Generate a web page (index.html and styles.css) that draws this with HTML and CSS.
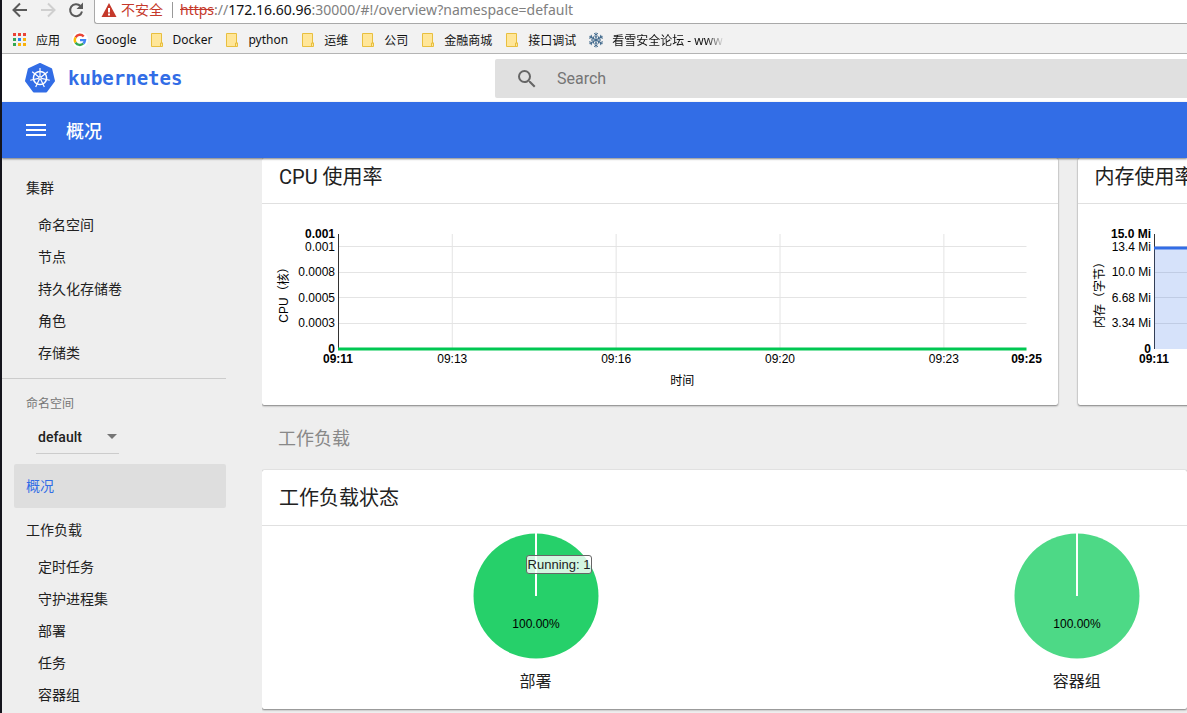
FILE: index.html
```html
<!DOCTYPE html>
<html lang="zh-CN">
<head>
<meta charset="utf-8">
<title>概况 - Kubernetes Dashboard</title>
<link rel="stylesheet" href="styles.css">
</head>
<body>
<svg class="sprites" aria-hidden="true">
  <symbol id="folder" viewBox="0 0 14 16"><path d="M1.500 1.500h10v9.500h1v3.500h-11z" fill="#ffe699" stroke="#e8bf3f"/><path d="M10.500 14v-3h2" fill="none" stroke="#e8bf3f"/></symbol>
</svg>
<div class="browser">
  <div class="toolbar">
    <nav class="history">
      <button aria-label="后退"><svg width="20" height="20" viewBox="0 0 20 20"><path d="M17 10H4M10 3.500 3.500 10l6.500 6.500" fill="none" stroke="#5a5a5a" stroke-width="2"/></svg></button>
      <button aria-label="前进"><svg width="20" height="20" viewBox="0 0 20 20"><path d="M3 10h13M10 3.500l6.500 6.500L10 16.500" fill="none" stroke="#cfcfcf" stroke-width="2"/></svg></button>
      <button aria-label="刷新"><svg width="20" height="20" viewBox="0 0 20 20"><path d="M14.500 6A6 6 0 1 0 16 11.500" fill="none" stroke="#5a5a5a" stroke-width="2"/><path d="M17 2.500V9h-6.500z" fill="#5a5a5a"/></svg></button>
    </nav>
    <div class="address">
      <svg width="16" height="14" viewBox="0 0 16 14"><path d="M8 0l7.500 14H.5z" fill="#c5392b"/><path d="M8 5v4.500M8 10.500v2" stroke="#fff" stroke-width="2"/></svg>
      <span class="unsafe">不安全</span>
      <span class="url"><s>https</s>://<b>172.16.60.96</b>:30000/#!/overview?namespace=default</span>
    </div>
  </div>
  <nav class="bookmarks">
    <a href="#apps"><svg width="16" height="16" viewBox="0 0 16 16"><path d="M1 1h3v3H1zM6 1h3v3H6zM11 1h3v3h-3z" fill="#ea4335"/><path d="M1 6h3v3H1z" fill="#34a853"/><path d="M6 6h3v3H6z" fill="#2684e8"/><path d="M11 6h3v3h-3zM6 11h3v3H6zM11 11h3v3h-3z" fill="#f9b20b"/><path d="M1 11h3v3H1z" fill="#34a853"/></svg>应用</a>
    <a href="#google"><svg width="16" height="16" viewBox="0 0 16 16"><circle cx="8" cy="8" r="8" fill="#fff"/><g fill="none" stroke-width="2.400"><path d="M3.600 5.300A5 5 0 0 1 11.700 4.500" stroke="#ea4335"/><path d="M3.600 5.300a5 5 0 0 0 0 5.400" stroke="#fbbc05"/><path d="M3.600 10.700a5 5 0 0 0 7.700.8" stroke="#34a853"/><path d="M11.300 11.500A5 5 0 0 0 13 8.100H8" stroke="#4285f4"/></g></svg>Google</a>
    <a href="#docker"><svg width="16" height="16"><use href="#folder"/></svg>Docker</a>
    <a href="#python"><svg width="16" height="16"><use href="#folder"/></svg>python</a>
    <a href="#ops"><svg width="16" height="16"><use href="#folder"/></svg>运维</a>
    <a href="#company"><svg width="16" height="16"><use href="#folder"/></svg>公司</a>
    <a href="#mall"><svg width="16" height="16"><use href="#folder"/></svg>金融商城</a>
    <a href="#api"><svg width="16" height="16"><use href="#folder"/></svg>接口调试</a>
    <a href="#kanxue"><svg width="16" height="16" viewBox="-8 -8 16 16"><g fill="none" stroke="#41698c"><path id="arm" d="M0 0V-7.500M-2-6.800 0-5 2-6.800M-1.800-4.300 0-2.600 1.800-4.300"/><use href="#arm" transform="rotate(60)"/><use href="#arm" transform="rotate(120)"/><use href="#arm" transform="rotate(180)"/><use href="#arm" transform="rotate(240)"/><use href="#arm" transform="rotate(300)"/></g></svg><span class="fade">看雪安全论坛 - www</span></a>
  </nav>
</div>
<header class="brandbar">
  <a class="brand" href="#home">
    <svg width="32" height="32" viewBox="-16 -16 32 32">
      <path d="M0-14 11.200-8.800 14 3 6.200 13.400H-6.200L-14 3-11.200-8.800z" fill="#326de6" stroke="#326de6" stroke-width="2" stroke-linejoin="round"/>
      <g fill="none" stroke="#fff"><circle r="6.600" stroke-width="1.500"/><g stroke-width="1.200"><path id="spoke" d="M0-1.500V-10"/><use href="#spoke" transform="rotate(51.400)"/><use href="#spoke" transform="rotate(102.900)"/><use href="#spoke" transform="rotate(154.300)"/><use href="#spoke" transform="rotate(205.700)"/><use href="#spoke" transform="rotate(257.100)"/><use href="#spoke" transform="rotate(308.600)"/></g></g>
      <circle r="1.900" fill="#fff"/><circle r=".7" fill="#326de6"/>
    </svg>
    <span>kubernetes</span>
  </a>
  <label class="search">
    <svg width="24" height="24" viewBox="0 0 24 24"><path fill="#666" d="M15.500 14h-.79l-.28-.27A6.471 6.471 0 0 0 16 9.500 6.500 6.500 0 1 0 9.500 16c1.610 0 3.090-.59 4.230-1.570l.27.28v.79l5 4.990L20.490 19l-4.990-5zm-6 0C7.010 14 5 11.990 5 9.500S7.010 5 9.500 5 14 7.010 14 9.500 11.990 14 9.500 14z"/></svg>
    <input type="search" placeholder="Search" aria-label="Search">
  </label>
</header>
<div class="titlebar">
  <button aria-label="菜单"><svg width="24" height="24" viewBox="0 0 24 24"><path d="M2 6h20v2H2zM2 11h20v2H2zM2 16h20v2H2z" fill="#fff"/></svg></button>
  <h1>概况</h1>
</div>
<div class="layout">
  <aside class="sidebar">
    <a class="group" href="#cluster">集群</a>
    <a class="item" href="#namespaces">命名空间</a>
    <a class="item" href="#nodes">节点</a>
    <a class="item" href="#volumes">持久化存储卷</a>
    <a class="item" href="#roles">角色</a>
    <a class="item" href="#storage">存储类</a>
    <div class="namespace">
      <label for="ns">命名空间</label>
      <div class="select">
        <select id="ns"><option>default</option></select>
        <svg width="10" height="5" viewBox="0 0 10 5"><path d="M0 0h10L5 5z" fill="#757575"/></svg>
      </div>
    </div>
    <a class="group active" href="#overview">概况</a>
    <a class="group" href="#workloads">工作负载</a>
    <a class="item" href="#cronjobs">定时任务</a>
    <a class="item" href="#daemonsets">守护进程集</a>
    <a class="item" href="#deployments">部署</a>
    <a class="item" href="#jobs">任务</a>
    <a class="item" href="#pods">容器组</a>
  </aside>
  <main class="content">
    <div class="charts">
      <section class="card">
        <h2 class="chart-title">CPU 使用率</h2>
        <div class="plot">
          <svg width="100%" height="115">
            <g class="grid">
              <line x1="0" x2="100%" y1="12.500" y2="12.500"/><line x1="0" x2="100%" y1="38.500" y2="38.500"/><line x1="0" x2="100%" y1="63.500" y2="63.500"/><line x1="0" x2="100%" y1="89.500" y2="89.500"/>
              <line x1="16.600%" x2="16.600%" y1="0" y2="115"/><line x1="40.400%" x2="40.400%" y1="0" y2="115"/><line x1="64.200%" x2="64.200%" y1="0" y2="115"/><line x1="88%" x2="88%" y1="0" y2="115"/>
            </g>
            <path d="M.5 0v115" stroke="#333"/>
            <line x1="0" x2="100%" y1="115" y2="115" stroke="#00c752" stroke-width="3"/>
            <g class="ylabels"><text x="-3" y="4" class="edge">0.001</text><text x="-3" y="17">0.001</text><text x="-3" y="42">0.0008</text><text x="-3" y="68">0.0005</text><text x="-3" y="93">0.0003</text><text x="-3" y="119" class="edge">0</text></g>
            <g class="xlabels"><text x="0" y="129" class="edge">09:11</text><text x="16.600%" y="129">09:13</text><text x="40.400%" y="129">09:16</text><text x="64.200%" y="129">09:20</text><text x="88%" y="129">09:23</text><text x="100%" y="129" class="edge">09:25</text><text x="50%" y="151">时间</text></g>
            <text class="axis" transform="translate(-50 58) rotate(-90)">CPU（核）</text>
          </svg>
        </div>
      </section>
      <section class="card">
        <h2 class="chart-title">内存使用率</h2>
        <div class="plot">
          <svg width="100%" height="115">
            <g class="grid"><line x1="0" x2="100%" y1="12.500" y2="12.500"/><line x1="0" x2="100%" y1="38.500" y2="38.500"/><line x1="0" x2="100%" y1="63.500" y2="63.500"/><line x1="0" x2="100%" y1="89.500" y2="89.500"/></g>
            <path d="M.5 0v115" stroke="#333"/>
            <rect y="13" width="100%" height="102" fill="#326de6" fill-opacity=".2"/>
            <line x1="0" x2="100%" y1="14" y2="14" stroke="#326de6" stroke-width="3"/>
            <g class="ylabels"><text x="-3" y="4" class="edge">15.0 Mi</text><text x="-3" y="17">13.4 Mi</text><text x="-3" y="42">10.0 Mi</text><text x="-3" y="68">6.68 Mi</text><text x="-3" y="93">3.34 Mi</text><text x="-3" y="119" class="edge">0</text></g>
            <g class="xlabels"><text x="0" y="129" class="edge">09:11</text></g>
            <text class="axis" transform="translate(-50 58) rotate(-90)">内存（字节）</text>
          </svg>
        </div>
      </section>
    </div>
    <h2 class="section-title">工作负载</h2>
    <section class="card status">
      <h3>工作负载状态</h3>
      <div class="pies">
        <figure>
          <div class="pie hover">
            <svg width="126" height="126" viewBox="-63 -63 126 126"><circle r="62.500" fill="#26d06a"/><path d="M0 0v-63" stroke="#fff" stroke-width="2"/><text y="32">100.00%</text></svg>
            <span class="tooltip">Running: 1</span>
          </div>
          <figcaption>部署</figcaption>
        </figure>
        <figure>
          <div class="pie">
            <svg width="126" height="126" viewBox="-63 -63 126 126"><circle r="62.500" fill="#4dd986"/><path d="M0 0v-63" stroke="#fff" stroke-width="2"/><text y="32">100.00%</text></svg>
          </div>
          <figcaption>容器组</figcaption>
        </figure>
      </div>
    </section>
  </main>
</div>
</body>
</html>
```

FILE: styles.css
```css
* { box-sizing: border-box; }
html { height: 100%; overflow: hidden; background: #eee; }
body {
  margin: 0;
  height: 100%;
  overflow: hidden;
  display: flex;
  flex-direction: column;
  border-left: 2px solid #14141c;
  background: #eee;
  color: #212121;
  font-family: Roboto, "Noto Sans CJK SC", sans-serif;
  font-size: 14px;
}
a { color: inherit; text-decoration: none; }
button { padding: 0; border: 0; background: none; display: flex; }
svg { flex: none; display: block; }
h1, h2, h3, figure { margin: 0; font-weight: 400; }
.sprites { position: absolute; width: 0; height: 0; }

.browser {
  flex: none;
  background: #f2f2f2;
  border-bottom: 1px solid #b4b4b4;
  font-family: "Noto Sans", "Noto Sans CJK SC", sans-serif;
}
.toolbar { display: flex; height: 24px; }
.history { display: flex; gap: 8px; padding-left: 8px; width: 92px; }
.address {
  flex: 1;
  display: flex;
  align-items: center;
  padding: 0 0 4px 6px;
  background: #fff;
  border: solid #a9a9a9;
  border-width: 0 0 1px 1px;
  border-bottom-left-radius: 3px;
  white-space: nowrap;
}
.unsafe {
  margin-left: 4px;
  padding-right: 9px;
  border-right: 1px solid #999;
  color: #c5392b;
  font-size: 14px;
  line-height: 16px;
}
.url { margin-left: 7px; color: #808080; font-size: 14px; line-height: 18px; }
.url s { color: #c5392b; }
.url b { color: #111; font-weight: 400; }
.bookmarks {
  display: flex;
  align-items: center;
  gap: 12px;
  height: 29px;
  padding: 2px 0 0 10px;
  color: #111;
  font-size: 12px;
  white-space: nowrap;
}
.bookmarks a { display: flex; align-items: center; gap: 8px; }
.fade {
  background: linear-gradient(90deg, #111 85%, #ddd);
  background-clip: text;
  color: transparent;
}

.brandbar { flex: none; display: flex; height: 48px; background: #fff; }
.brand {
  flex: 0 0 493px;
  display: flex;
  align-items: center;
  gap: 12px;
  padding-left: 22px;
  color: #326de6;
  font: bold 19px "DejaVu Sans Mono", monospace;
}
.search {
  flex: 1;
  display: flex;
  align-items: center;
  gap: 18px;
  margin: 5px 0 4px;
  padding-left: 20px;
  background: #e0e0e0;
  border-radius: 2px 0 0 2px;
}
.search input {
  flex: 1;
  min-width: 0;
  padding: 0;
  border: 0;
  outline: 0;
  background: none;
  font: 16px Roboto, sans-serif;
}
.search input::placeholder { color: #757575; }

.titlebar {
  flex: none;
  position: relative;
  z-index: 1;
  display: flex;
  align-items: center;
  gap: 18px;
  height: 56px;
  padding-left: 22px;
  background: #326de6;
  color: #fff;
  box-shadow: 0 1px 2px rgba(0, 0, 0, .5);
}
.titlebar h1 { font-size: 18px; font-weight: 500; }

.layout { flex: 1; min-height: 0; display: flex; }
.sidebar {
  flex: 0 0 260px;
  padding: 8px 36px 0 0;
  overflow: hidden;
}
.group { display: flex; align-items: center; height: 42px; margin-left: 12px; padding: 0 12px; }
.active { height: 44px; padding-bottom: 2px; background: #dedede; border-radius: 2px; color: #326de6; }
.item { display: flex; align-items: center; height: 32px; padding-left: 36px; }
.namespace {
  height: 86px;
  margin-top: 10px;
  padding: 15px 0 0 24px;
  border-top: 1px solid #ccc;
}
.namespace label { display: block; color: #757575; font-size: 12px; line-height: 20px; }
.select {
  display: flex;
  align-items: center;
  width: 83px;
  height: 34px;
  margin: 6px 0 0 10px;
  padding: 0 2px;
  border-bottom: 1px solid #ccc;
}
.select select {
  flex: 1;
  min-width: 0;
  padding: 0;
  border: 0;
  appearance: none;
  background: none;
  color: #212121;
  font: 500 14px Roboto, sans-serif;
}

.content { flex: 1; min-width: 0; overflow: hidden; }
.card { background: #fff; border-radius: 2px; box-shadow: 0 1px 2px rgba(0, 0, 0, .45), 0 0 1px rgba(0, 0, 0, .3); }
.charts { display: flex; gap: 20px; }
.charts .card { flex: 0 0 86%; height: 247px; }
.chart-title {
  height: 46px;
  padding: 4px 17px;
  border-bottom: 1px solid #e0e0e0;
  font-size: 20px;
  line-height: 30px;
}
.plot { padding: 30px 31px 0 76px; }
.plot svg { overflow: visible; }
.plot text { fill: #000; font: 12px "Liberation Sans", "Noto Sans CJK SC", sans-serif; }
.plot .edge { font-weight: 700; }
.grid line { stroke: #e4e4e4; }
.ylabels text { text-anchor: end; }
.xlabels text, .plot .axis { text-anchor: middle; }
.section-title {
  height: 65px;
  padding: 0 16px;
  color: #888;
  font-size: 18px;
  line-height: 67px;
}
.status h3 {
  height: 56px;
  padding: 0 17px;
  border-bottom: 1px solid #e0e0e0;
  font-size: 20px;
  line-height: 56px;
}
.pies { display: flex; height: 183px; padding: 7px 0 0 3px; }
.pies figure { flex: 0 0 58.7%; display: flex; flex-direction: column; align-items: center; }
.pie { position: relative; }
.pie text { fill: #000; font: 12px "Liberation Sans", sans-serif; text-anchor: middle; }
.tooltip {
  position: absolute;
  top: 22px;
  left: 53px;
  padding: 0 1px;
  border: 1px solid #666;
  border-radius: 3px;
  background: rgba(255, 255, 255, .8);
  font: 13px/17px "Liberation Sans", sans-serif;
  white-space: nowrap;
}
figcaption { margin-top: 11px; font-size: 16px; line-height: 24px; }
```
